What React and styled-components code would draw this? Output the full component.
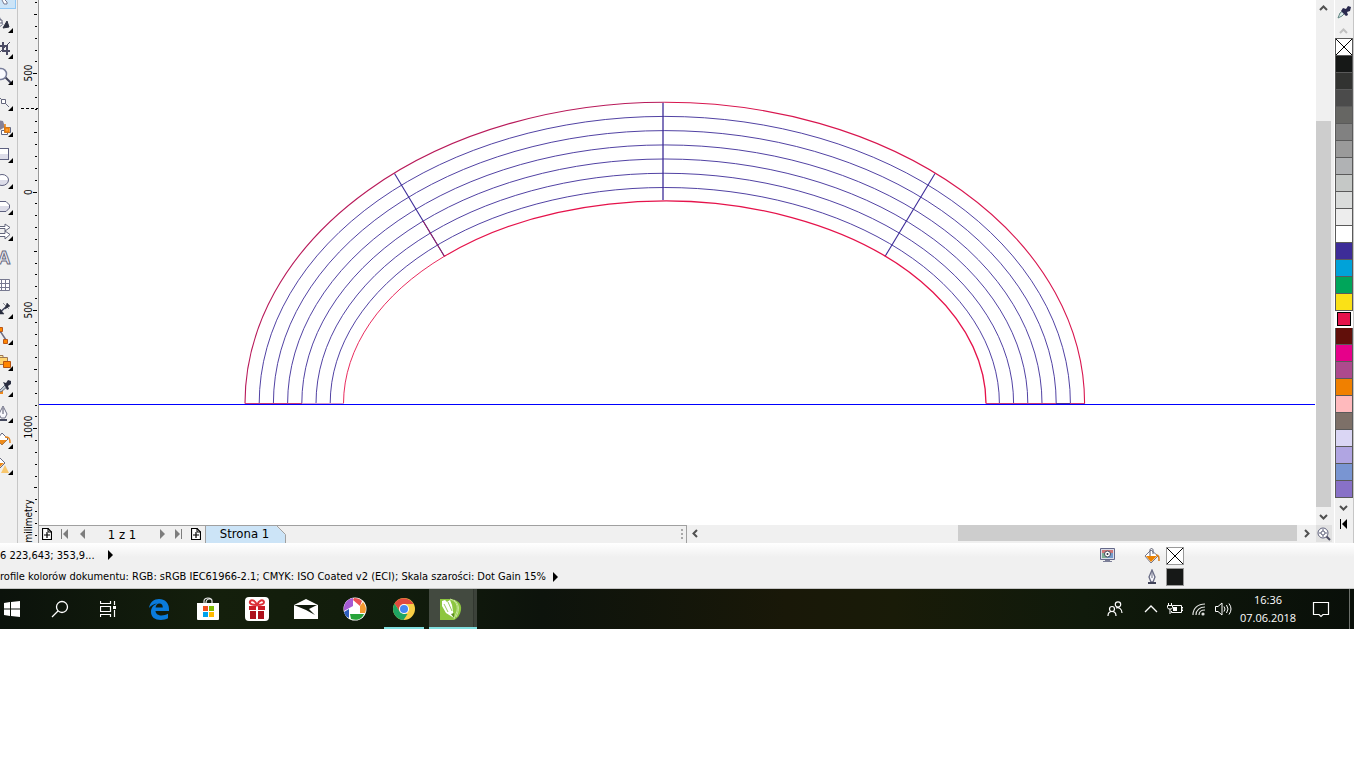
import React from 'react';
import styled, { createGlobalStyle } from 'styled-components';

const GlobalStyle = createGlobalStyle`
  * {
    box-sizing: border-box;
  }

  body {
    margin: 0;
    background: #fff;
    color: #000;
    font-family: "DejaVu Sans Condensed", "DejaVu Sans", sans-serif;
    font-size: 11px;
  }

  button {
    display: flex;
    align-items: center;
    justify-content: center;
    flex: none;
    margin: 0;
    padding: 0;
    border: 0;
    background: none;
    color: inherit;
    font: inherit;
  }

  svg {
    display: block;
    flex: none;
  }
`;

const Screen = styled.div`
  padding-right: 12px;
  overflow: hidden;
`;

const Workspace = styled.main`
  display: grid;
  grid-template-columns: 18px 21px minmax(0, 1fr) 18px 20px;
  grid-template-rows: auto 18px;
  background: #f0f0f0;
`;

const Toolbox = styled.nav`
  grid-row: 1 / 3;
  border-right: 1px solid #c6c6c6;
`;

const ToolButton = styled.button`
  width: 16px;
  height: ${props => props.height || '26px'};
  background: ${props => props.active ? '#cce4f7' : 'none'};
  border: solid #90c8f6;
  border-width: ${props => props.active ? '0 1px 1px 0' : '0'};
`;

const Ruler = styled.div`
  grid-row: 1 / 3;
  border-right: 1px solid #999;
`;

const Canvas = styled.section`
  background: #fff;
  overflow: hidden;
`;

const VerticalScroll = styled.div`
  display: flex;
  flex-direction: column;
  width: 15px;
`;

const HorizontalScroll = styled.div`
  display: flex;
  flex: 1;
  align-items: stretch;
  padding-bottom: 2px;
`;

const ScrollTrack = styled.div`
  flex: 1;
  display: flex;
  flex-direction: ${props => props.vertical ? 'column' : 'row'};
  justify-content: flex-end;
`;

const ScrollThumb = styled.div`
  flex: 0 0 ${props => props.size};
  background: #cdcdcd;
`;

const ScrollButton = styled.button`
  width: ${props => props.width || '15px'};
  height: ${props => props.height || '16px'};
  color: #505050;
`;

const PageBar = styled.div`
  grid-column: 3;
  display: flex;
  min-width: 0;
`;

const PageNav = styled.div`
  display: flex;
  align-items: center;
  width: 648px;
  border-top: 1px solid #a0a0a0;
  border-right: 1px solid #a0a0a0;
`;

const NavButton = styled.button`
  width: ${props => props.width};
  height: 16px;
  padding-bottom: 1px;
  color: #7d7d7d;
`;

const PageCount = styled.span`
  width: 68px;
  padding-right: 2px;
  text-align: center;
  font-size: 13px;
  line-height: 16px;
`;

const PageTab = styled.button`
  position: relative;
  width: 81px;
  height: 17px;
  padding: 0 3px 2px 0;
  background: #cce4f7;
  border-left: 1px solid #a0a0a0;
  font-size: 13px;
`;

const TabEdge = styled.svg`
  position: absolute;
  top: 0;
  right: 0;
`;

const Grip = styled.div`
  margin-left: auto;
  padding-right: 3px;
`;

const ZoomCorner = styled.button`
  width: 16px;
  height: 17px;
  background: #e1e1e1;
`;

const Palette = styled.aside`
  grid-column: 5;
  grid-row: 1 / 3;
  display: flex;
  flex-direction: column;
  align-items: flex-start;
  border: solid #fff;
  border-width: 0 0 0 1px;
  box-shadow: inset -1px 0 #c6c6c6;
`;

const PaletteButton = styled.button`
  width: ${props => props.width || '18px'};
  height: ${props => props.height};
  color: ${props => props.color || '#505050'};
`;

const Swatch = styled.button`
  width: 18px;
  height: 17px;
  background: ${props => props.color};
  border: solid #5a5a5a;
  border-width: 0 1px 1px 1px;
  ${props => props.first && 'height: 18px; border-top-width: 1px;'}
  ${props => props.selected && `
    border-width: 0;
    padding-right: 1px;
    background: #fff;
  `}
`;

const SelectedFill = styled.span`
  width: 14px;
  height: 14px;
  margin-bottom: 1px;
  border: 1px solid #000;
  background: ${props => props.color};
`;

const StatusBar = styled.footer`
  display: grid;
  grid-template-columns: minmax(0, 1fr) 44px 22px 188px;
  grid-template-rows: 23px 20px;
  height: 46px;
  padding-top: 1px;
  background: linear-gradient(#fff, #f0f0f0 14px);
  border-bottom: 1px solid #c6c6c6;
`;

const StatusText = styled.div`
  display: flex;
  align-items: center;
  gap: ${props => props.gap};
  padding-bottom: 1px;
  white-space: nowrap;
`;

const StatusCell = styled.div`
  display: flex;
  align-items: center;
  grid-column: ${props => props.column};
`;

const Chip = styled.span`
  width: 18px;
  height: 18px;
  border: 1px solid #999;
  background: ${props => props.color};
`;

const Taskbar = styled.footer`
  display: flex;
  height: 40px;
  color: #fff;
  background: linear-gradient(90deg, #0b120b 0, #141f0c 16%, #111c0c 30%, #0d130c 40%, #191808 58%, #191b08 66%, #101a0b 80%, #090f09 100%);
`;

const TaskButton = styled.button`
  width: ${props => props.width || '48px'};
  height: 40px;
`;

const AppButtons = styled.div`
  display: flex;
  gap: 1px;
  margin-left: 15px;
`;

const AppButton = styled(TaskButton)`
  background: ${props => props.active ? 'linear-gradient(90deg, #434a40 44px, #272c25 44px, #3c423a 45px)' : 'none'};
  border-bottom: ${props => props.running ? '2px solid #80dfdf' : '0'};
  padding-top: 2px;
  padding-right: ${props => props.active ? '4px' : '0'};
  ${props => props.inset && 'width: 40px; margin: 0 4px;'}
`;

const Tray = styled.div`
  display: flex;
  margin-left: auto;
`;

const Clock = styled.button`
  flex-direction: column;
  width: 66px;
  height: 40px;
  font-family: "Open Sans", "Noto Sans", sans-serif;
  font-size: 11px;
  line-height: 18px;
`;

const ActionButton = styled(TaskButton)`
  padding-right: 8px;
`;

const ShowDesktop = styled.button`
  width: 5px;
  height: 40px;
  border-left: 1px solid #6c706b;
`;

const SWATCHES = [
  '#fff', '#161817', '#323331', '#4b4b4b', '#666663', '#818181', '#9a9a9a',
  '#b0b2b4', '#c5c8c6', '#dadcdb', '#ededed', '#fff', '#3d2c98', '#00a2d9',
  '#00a55a', '#fae117', '#e5134b', '#610f0a', '#e6008a', '#ad4a8d', '#f08000',
  '#ffbabd', '#7d7068', '#dad6f4', '#b0a5e2', '#7995d2', '#8871c7'
];

const Flyout = () => <path d="M13 19v5H8z" fill="#000" />;

const TOOLS = [
  {
    name: 'Shape',
    drawing: <>
      <path d="M-1 7l4 9M-2 19l4-3" stroke="#777b93" fill="none" />
      <path d="M-1 11h3v3h-3z" fill="#fff" stroke="#606078" />
      <path d="M7 12l2 6-6 1z" fill="#2d3041" stroke="#2d3041" />
    </>
  },
  {
    name: 'Crop',
    drawing: <>
      <path d="M-1 11H7v9M3 7v9h7" stroke="#4b4b64" strokeWidth="2" fill="none" />
      <path d="M10 7L0 17" stroke="#4b4b64" />
    </>
  },
  {
    name: 'Zoom',
    drawing: <>
      <path d="M5 16l6 6" stroke="#41435a" strokeWidth="2" />
      <circle cx="1" cy="13" r="5.500" fill="#f9faff" stroke="#777d9a" strokeWidth="1.500" />
    </>
  },
  {
    name: 'Freehand',
    drawing: <>
      <path d="M-3 8l6 6 6 6" stroke="#676a82" fill="none" />
      <path d="M1.500 12.500h4v4h-4z" fill="#fff" stroke="#65677d" />
    </>
  },
  {
    name: 'Smart fill',
    drawing: <>
      <path d="M-2 7l5 1 2 6-5 3z" fill="#858197" />
      <path d="M4.500 14.500h6v5h-6zM1.500 17.500h6v4h-6z" fill="#fff" stroke="#606682" />
      <path d="M5 11v8h4v-4H5" stroke="#f17d00" strokeWidth="1.500" fill="#f99f35" />
    </>
  },
  {
    name: 'Rectangle',
    drawing: <rect x="-5.500" y="9.500" width="14" height="11" fill="url(#silver)" stroke="#5e6180" />
  },
  {
    name: 'Ellipse',
    drawing: <ellipse cx="2" cy="15" rx="6.500" ry="5.500" fill="url(#silver)" stroke="#5e6180" />
  },
  {
    name: 'Polygon',
    drawing: <path d="M-4 10.500H6L9.500 14v3L6 20.500H-4z" fill="url(#silver)" stroke="#5e6180" />
  },
  {
    name: 'Basic shapes',
    drawing: <path d="M-2 9.500h7V7l5 3.500L5 14v-2.500h-7zM-2 16.500h7V14l5 3.500L5 22v-2.500h-7z" fill="#fff" stroke="#62667c" />
  },
  {
    name: 'Text',
    plain: true,
    drawing: <text x="4" y="21" fontSize="18" textAnchor="middle" fontFamily="Liberation Sans" fontWeight="700" fill="#f6f6fc" stroke="#696b80">A</text>
  },
  {
    name: 'Table',
    plain: true,
    drawing: <path d="M-4 10.500H9.500v11H-4zM-4 14.500H9M-4 18.500H9M1.500 10v12M5.500 10v12" fill="#fff" stroke="#777990" />
  },
  {
    name: 'Dimension',
    drawing: <>
      <path d="M-3 20L7 11" stroke="#3d415b" strokeWidth="1.500" />
      <path d="M3 8l6 6M7 8l3 3-5 3zM0 14v5h4z" fill="#292d3e" stroke="#292d3e" strokeWidth="0.500" />
    </>
  },
  {
    name: 'Connector',
    drawing: <>
      <path d="M0 10l6 9" stroke="#6d6c83" strokeWidth="1.500" />
      <path d="M-1.500 6.500h4v4h-4zM3.500 18.500h4v4h-4z" fill="#ff8700" stroke="#b9571a" />
    </>
  },
  {
    name: 'Blend',
    drawing: <>
      <path d="M-3 8.500h6v7h-6z" fill="#fff0a0" stroke="#9e7653" />
      <path d="M-.5 10.500h8v7h-8z" fill="#ffd570" stroke="#9e7653" />
      <path d="M3.500 14.500h7v6h-7z" fill="#ff8500" stroke="#b55210" />
    </>
  },
  {
    name: 'Color eyedropper',
    drawing: <>
      <path d="M-3 17h6v4h-6z" fill="#f18a1b" />
      <path d="M-1 18L6 11l2 2-7 6z" fill="#c2cbd2" stroke="#6c7488" />
      <path d="M3 9l3 1 2-3 3 1v3l-3 2 1 3-2 1z" fill="#2a2e40" />
    </>
  },
  {
    name: 'Outline pen',
    drawing: <>
      <path d="M3 7l4 8-2 4H1l-2-4z" fill="#f8f8fc" stroke="#717388" />
      <path d="M3 9v6" stroke="#505368" />
      <path d="M-1 20h8v2h-8z" fill="#45495e" />
    </>
  },
  {
    name: 'Interactive fill',
    drawing: <>
      <path d="M-2 13l4-5 6 6-6 6-5-5" fill="#fff" stroke="#65677e" />
      <path d="M-3 15h10l-5 5z" fill="#ee8b19" />
      <path d="M5 12c4 0 5 1 5 6" stroke="#e7851a" strokeWidth="1.500" fill="none" />
    </>
  },
  {
    name: 'Transparency',
    drawing: <>
      <path d="M-4 9l4-2 5 5-5 5-4-1" fill="#fff" stroke="#696c82" />
      <path d="M-3 12h7l-4 4z" fill="#ee8b19" />
      <path d="M5 14l4 8H1z" fill="#f8c76e" />
    </>
  }
];

const Chevron = ({ turn = 0 }) =>
  <svg width="9" height="9" viewBox="0 0 9 9">
    <path d="M1 6l3.500-3.500L8 6" fill="none" stroke="currentColor" strokeWidth="2" transform={`rotate(${turn} 4.500 4.500)`} />
  </svg>;

const AddPageIcon = () =>
  <svg width="10" height="12" viewBox="0 0 10 12">
    <path d="M.5.5H6l3.500 3.500v7.500H.5zM5 4v6M2 7h6" fill="#fff" stroke="#000" strokeWidth="1.200" />
    <path d="M6 0v4h4" fill="none" stroke="#000" />
  </svg>;

const Arrow = ({ left, bar }) =>
  <svg width="9" height="10" viewBox="0 0 9 10">
    <g transform={left ? 'matrix(-1 0 0 1 9 0)' : undefined} fill="currentColor">
      <path d="M1 0l5 5-5 5z" />
      {bar && <path d="M7 0h1v10H7z" />}
    </g>
  </svg>;

const EyedropperIcon = () =>
  <svg width="14" height="14" viewBox="0 0 14 14">
    <path d="M1 13l2-5 4-3 2 2-4 4z" fill="#dcebea" stroke="#608581" />
    <path d="M6 3l3 1 2-3 3 1-1 4-3 1 1 3-2 1-5-5z" fill="#29294d" />
  </svg>;

const BucketIcon = () =>
  <svg width="16" height="16" viewBox="0 0 16 16">
    <path d="M7 2l7 6-7 7-6-7z" fill="#fff" stroke="#74778b" />
    <path d="M2 8h11l-6 6z" fill="#ec8200" />
    <path d="M6 8V2c0-2 3-2 3 0v4" fill="none" stroke="#5b5d72" />
    <path d="M12 7c3 0 3 2 3 6" fill="none" stroke="#d87c17" strokeWidth="1.500" />
  </svg>;

const PenIcon = () =>
  <svg width="16" height="16" viewBox="0 0 16 16">
    <path d="M8 1l3 7-2 5H7L5 8z" fill="#f8f8fc" stroke="#696c85" strokeWidth="1.300" />
    <path d="M8 3v6" stroke="#6d7087" />
    <path d="M4 13h8v2H4z" fill="#414459" />
  </svg>;

const ProofIcon = () =>
  <svg width="15" height="15" viewBox="0 0 15 15">
    <path d="M.5.5h14v11H.5z" fill="#dadce8" stroke="#65698a" />
    <path d="M2 2h11v3H2z" fill="#cf7777" />
    <path d="M2 5h5v5H2z" fill="#7eae94" />
    <path d="M7 5h6v5H7z" fill="#759bcb" />
    <circle cx="7.500" cy="6" r="3" fill="#fff" stroke="#45485c" />
    <circle cx="7.500" cy="6" r="1" fill="#2a2c3a" />
    <path d="M5 12h5v1h2v1H3v-1h2z" fill="#7c7f98" />
  </svg>;

const CrossIcon = () =>
  <svg width="16" height="16" viewBox="0 0 16 16">
    <path d="M0 0l16 16M16 0L0 16" stroke="#000" />
  </svg>;

const RulerScale = () => {
  const ticks = [];
  for (let i = 0; i < 46; i++) {
    const y = Math.floor(2.800 + i * 11.830) + 0.5;
    // the scale reads 500 at the seventh division
    const long = (i - 6) % 10 === 0;
    const half = (i - 1) % 5 === 0;
    ticks.push(`M${long ? 15 : half ? 16 : 17} ${y}H19`);
  }
  return (
    <svg width="20" height="543" viewBox="0 0 20 543">
      <path d={ticks.join('')} stroke="#000" />
      <path d="M3 108.500H20" stroke="#000" strokeDasharray="3 2" />
      {[['500', 73], ['0', 192], ['500', 310], ['1000', 427], ['milimetry', 521]].map(([label, y]) =>
        <text key={y} x="14" y={y} fontSize="10" textAnchor="middle" transform={`rotate(-90 14 ${y})`}>{label}</text>
      )}
    </svg>
  );
};

const RINGS = [1, 2, 3, 4, 5, 6].map(i => 14.200 * i);

const ArchDrawing = () =>
  <svg width="100%" height="525" viewBox="39 0 1277 525" preserveAspectRatio="xMinYMin slice">
    <g fill="none" stroke="#3d2c98" strokeWidth="0.900">
      {RINGS.map(d =>
        <path key={d} d={`M${245 + d} 403.500A${419.800 - d} ${301.300 - d} 0 0 1 ${1084.600 - d} 403.500`} />
      )}
      <path d="M394.500 173.500L444.500 256.500" strokeWidth="1.100" />
      <path d="M935 173.500L885 256.500" strokeWidth="1.100" />
      <path d="M663 103V200" strokeWidth="2" strokeOpacity="0.650" />
    </g>
    <path d="M423 221L444.500 256.500" stroke="#a01f60" />
    <g fill="none" strokeWidth="1.100">
      <path d="M245 403.500A419.800 301.300 0 0 1 664.800 102.200" stroke="#b81a5a" />
      <path d="M664.800 102.200A419.800 301.300 0 0 1 1084.600 403.500" stroke="#d8164f" />
      <path d="M343.500 403.500A321.200 202.800 0 0 1 444.500 256.200" stroke="#e5134b" strokeWidth="0.900" />
      <path d="M444.500 256.200A321.200 202.800 0 0 1 986 403.500" stroke="#e5134b" strokeWidth="1.300" />
    </g>
    <path d="M245 403.500H302M986 403.500H1085" stroke="#c83d72" />
    <path d="M302 403.500H344" stroke="#d99bc4" />
    <path d="M1056 403.500H1070" stroke="#5a2b85" />
    <path d="M39 404.500H1315" stroke="#0000ff" />
  </svg>;

const StartIcon = () =>
  <svg width="16" height="16" viewBox="0 0 16 16">
    <path d="M0 2l6-1v6.500H0zM7 1l9-1v7.500H7zM0 8.500h6V15l-6-1zM7 8.500h9V16l-9-1z" fill="#fff" />
  </svg>;

const SearchIcon = () =>
  <svg width="18" height="18" viewBox="0 0 18 18">
    <circle cx="11" cy="7" r="5.500" fill="none" stroke="#fff" strokeWidth="1.300" />
    <path d="M7 11l-6 6" stroke="#fff" strokeWidth="1.300" />
  </svg>;

const TaskViewIcon = () =>
  <svg width="17" height="16" viewBox="0 0 17 16">
    <path d="M.5 0v2.500h10V0M.5 5.500h10v5H.5zM.5 16v-2.500h10V16M14.500 0v4M14.500 9v7" fill="none" stroke="#fff" strokeWidth="1.200" />
    <path d="M13 5h3v3h-3z" fill="#fff" />
  </svg>;

const EdgeIcon = () =>
  <svg width="22" height="22" viewBox="0 0 22 22">
    <path d="M1 10C2 4 6 1 11 1c6 0 10 4 10 10v2H7.500c.2 3 3 4.500 6 4.500 2.300 0 4.500-.7 6.500-1.700v4.500c-2 1.100-4.600 1.700-7.200 1.700C7 22 3 19 3 14c0-4 2.200-7 6-8.500C5.800 5.700 3 7.500 1 10zM7.600 9.500h7.200c0-2.500-1.100-4-3.500-4-2.200 0-3.500 1.800-3.700 4z" fill="#0a7bdb" fillRule="evenodd" />
  </svg>;

const StoreIcon = () =>
  <svg width="24" height="24" viewBox="0 0 24 24">
    <path d="M8 7V4c0-4 8-4 8 0v3M10 6c0-5 6-5 6-2" fill="none" stroke="#e8e8e8" strokeWidth="1.200" />
    <path d="M1 6h22v16q0 1-1 1H2q-1 0-1-1z" fill="#fff" />
    <path d="M7 9h5v5H7z" fill="#f05020" />
    <path d="M13 9h5v5h-5z" fill="#7cb900" />
    <path d="M7 15h5v5H7z" fill="#00a2ed" />
    <path d="M13 15h5v5h-5z" fill="#ffb900" />
  </svg>;

const GiftIcon = () =>
  <svg width="24" height="24" viewBox="0 0 24 24">
    <rect width="24" height="24" rx="4" fill="#fff" />
    <path d="M12 8C9 1 4 3 5 6q1 2 7 2c6 0 7-1 7-3-1-3-5-2-7 3z" fill="none" stroke="#dc3038" strokeWidth="2" />
    <path d="M4 9h7v4H4zM13 9h7v4h-7z" fill="#cc1b26" />
    <path d="M5 14h6v8H5zM13 14h6v8h-6z" fill="#ad101b" />
  </svg>;

const MailIcon = () =>
  <svg width="24" height="20" viewBox="0 0 24 20">
    <path d="M0 6L12 0l12 6v14H0z" fill="#fff" />
    <path d="M0 6h23l-8 4 6 6-9-5z" fill="#10190c" />
  </svg>;

const PicasaIcon = () =>
  <svg width="24" height="24" viewBox="0 0 24 24">
    <circle cx="12" cy="12" r="11.500" fill="#fff" />
    <path d="M10 1v8l-9 5C0 7 4 2 10 1z" fill="#a65bd3" />
    <path d="M11 1c4 0 6 1 8 3l-2 5-7-6z" fill="#ec5252" />
    <path d="M20 5c4 5 3 8 2 11h-5V9z" fill="#f69a32" />
    <path d="M7 17h14c-2 5-7 7-13 5z" fill="#27a33a" />
    <path d="M1 15l5-3v9c-3-1-4-3-5-6z" fill="#2d5cbd" />
  </svg>;

const ChromeIcon = () =>
  <svg width="22" height="22" viewBox="0 0 22 22">
    <circle cx="11" cy="11" r="11" fill="#f8ce45" />
    <path d="M1.500 5.500A11 11 0 0 1 20.500 6H11L6.700 13.500z" fill="#e04a3f" />
    <path d="M1.500 5.500L6.700 13.500 11 16l3.500 0L10.500 22A11 11 0 0 1 1.500 5.500z" fill="#1fa463" />
    <circle cx="11" cy="11" r="5" fill="#fff" />
    <circle cx="11" cy="11" r="4" fill="#4587f3" />
  </svg>;

const CorelIcon = () =>
  <svg width="22" height="22" viewBox="0 0 22 22">
    <path d="M0 1h9c8 0 13 4 12 11-1 5-3 8-7 10H0z" fill="#8dc63f" />
    <path d="M10 1c6 2 8 6 7 12l-3 8M14 2c5 4 6 9 2 17" fill="none" stroke="#c9e59d" />
    <path d="M2 3l3-1 2 2 3-2 2 5 2 13-8-5-4-7z" fill="#fff" />
    <path d="M4 6l4 8M8 4l4 9" stroke="#9bc961" />
    <path d="M11 16l3 4v-5z" fill="#5d8f22" />
  </svg>;

const PeopleIcon = () =>
  <svg width="16" height="16" viewBox="0 0 16 16" fill="none" stroke="#fff" strokeWidth="1.200">
    <circle cx="5" cy="8" r="2.500" />
    <path d="M1 15c0-6 8-6 8 0" />
    <circle cx="11" cy="3.500" r="2.700" />
    <path d="M9 7c3-1 6 1 6 5" />
  </svg>;

const TrayChevron = () =>
  <svg width="14" height="8" viewBox="0 0 14 8">
    <path d="M1 7l6-6 6 6" fill="none" stroke="#fff" strokeWidth="1.300" />
  </svg>;

const BatteryIcon = () =>
  <svg width="16" height="12" viewBox="0 0 16 12">
    <path d="M6 2.500h8.500v7H4.500V8M15 4.500h1v3h-1" fill="none" stroke="#fff" />
    <path d="M6 4h4v4H6z" fill="#fff" />
    <path d="M1.500 0v2M4.500 0v2M.5 2.500h5v2l-1 1.500h-3l-1-1.500zM3 6v5" fill="none" stroke="#fff" />
  </svg>;

const WifiIcon = () =>
  <svg width="14" height="13" viewBox="0 0 14 13" fill="none" stroke="#e0e2df" strokeWidth="1.200">
    <path d="M1 12C1 5 6 1 13 1M4 12c0-5 4-8 9-8M7 12c0-3 2-5 6-5" />
    <circle cx="11" cy="11" r="1" fill="#fff" />
  </svg>;

const VolumeIcon = () =>
  <svg width="17" height="14" viewBox="0 0 17 14" fill="none" stroke="#fff">
    <path d="M.5 4.500H3l4-3.500v12L3 9.500H.5zM9 4.500q2 2.500 0 5M11.500 3q3 4 0 8M14 1.500q4 5.500 0 11" />
  </svg>;

const ActionIcon = () =>
  <svg width="18" height="17" viewBox="0 0 18 17">
    <path d="M1.500 1.500h15v12H11L9 15.500 7 13.500H1.500z" fill="none" stroke="#fff" strokeWidth="1.200" />
  </svg>;

const ToolboxPanel = () =>
  <Toolbox aria-label="Toolbox">
    <ToolButton active={1} height="9px" aria-label="Pick">
      <svg width="16" height="9" viewBox="0 0 16 9">
        <defs>
          <linearGradient id="silver" x2="0" y2="1">
            <stop offset="0.500" stopColor="#fff" />
            <stop offset="0.500" stopColor="#dddde9" />
          </linearGradient>
        </defs>
        <path d="M2 0l2 4h3V2L5 0" fill="#fff" stroke="#777b93" />
      </svg>
    </ToolButton>
    {TOOLS.map(tool =>
      <ToolButton key={tool.name} aria-label={tool.name}>
        <svg width="16" height="26" viewBox="0 0 16 26">
          {tool.drawing}
          {!tool.plain && <Flyout />}
        </svg>
      </ToolButton>
    )}
  </Toolbox>;

const PalettePanel = () =>
  <Palette aria-label="Colour palette">
    <PaletteButton height="24px" aria-label="Eyedropper"><EyedropperIcon /></PaletteButton>
    <PaletteButton width="17px" height="14px" color="#c0c0c0" aria-label="Scroll up"><Chevron /></PaletteButton>
    {SWATCHES.map((color, i) => {
      const selected = color === '#e5134b';
      return (
        <Swatch key={i} color={color} first={i === 0 ? 1 : undefined} selected={selected} aria-label={color}>
          {i === 0 && <CrossIcon />}
          {selected && <SelectedFill color={color} />}
        </Swatch>
      );
    })}
    <PaletteButton width="17px" height="18px" aria-label="Scroll down"><Chevron turn={180} /></PaletteButton>
    <PaletteButton width="17px" height="16px" color="#000" aria-label="Expand palette"><Arrow left bar /></PaletteButton>
  </Palette>;

const PageControls = () =>
  <PageBar>
    <PageNav>
      <NavButton width="16px" aria-label="Add page before"><AddPageIcon /></NavButton>
      <NavButton width="18px" aria-label="First page"><Arrow left bar /></NavButton>
      <NavButton width="16px" aria-label="Previous page"><Arrow left /></NavButton>
      <PageCount>1 z 1</PageCount>
      <NavButton width="12px" aria-label="Next page"><Arrow /></NavButton>
      <NavButton width="18px" aria-label="Last page"><Arrow bar /></NavButton>
      <NavButton width="18px" aria-label="Add page after"><AddPageIcon /></NavButton>
      <PageTab>
        Strona 1
        <TabEdge width="10" height="17" viewBox="0 0 10 17">
          <path d="M0 0h10v9z" fill="#f0f0f0" />
          <path d="M1 0l8.500 8.500V17" fill="none" stroke="#a0a0a0" />
        </TabEdge>
      </PageTab>
      <Grip>
        <svg width="2" height="11" viewBox="0 0 2 11">
          <path d="M0 0h2v2H0zM0 4h2v2H0zM0 8h2v2H0z" fill="#a8a8a8" />
        </svg>
      </Grip>
    </PageNav>
    <HorizontalScroll>
      <ScrollButton width="17px" aria-label="Scroll left"><Chevron turn={-90} /></ScrollButton>
      <ScrollTrack>
        <ScrollThumb size="339px" />
      </ScrollTrack>
      <ScrollButton width="19px" aria-label="Scroll right"><Chevron turn={90} /></ScrollButton>
    </HorizontalScroll>
  </PageBar>;

const StatusPanel = () =>
  <StatusBar>
    <StatusText gap="12px">
      <span>6 223,643; 353,9...</span>
      <Arrow />
    </StatusText>
    <StatusCell column="2"><ProofIcon /></StatusCell>
    <StatusCell column="3"><BucketIcon /></StatusCell>
    <StatusCell column="4"><Chip color="#fff"><CrossIcon /></Chip></StatusCell>
    <StatusText gap="6px">
      <span>rofile kolorów dokumentu: RGB: sRGB IEC61966-2.1; CMYK: ISO Coated v2 (ECI); Skala szarości: Dot Gain 15%</span>
      <Arrow />
    </StatusText>
    <StatusCell column="3"><PenIcon /></StatusCell>
    <StatusCell column="4"><Chip color="#161817" /></StatusCell>
  </StatusBar>;

const TaskbarPanel = () =>
  <Taskbar>
    <TaskButton width="24px" aria-label="Start"><StartIcon /></TaskButton>
    <TaskButton width="72px" aria-label="Search"><SearchIcon /></TaskButton>
    <TaskButton width="24px" aria-label="Task view"><TaskViewIcon /></TaskButton>
    <AppButtons>
      <TaskButton aria-label="Edge"><EdgeIcon /></TaskButton>
      <TaskButton aria-label="Store"><StoreIcon /></TaskButton>
      <TaskButton aria-label="Gifts"><GiftIcon /></TaskButton>
      <TaskButton aria-label="Mail"><MailIcon /></TaskButton>
      <TaskButton aria-label="Picasa"><PicasaIcon /></TaskButton>
      <AppButton running={1} inset={1} aria-label="Chrome"><ChromeIcon /></AppButton>
      <AppButton running={1} active={1} aria-label="CorelDRAW"><CorelIcon /></AppButton>
    </AppButtons>
    <Tray>
      <TaskButton aria-label="People"><PeopleIcon /></TaskButton>
      <TaskButton width="24px" aria-label="Show hidden icons"><TrayChevron /></TaskButton>
      <TaskButton width="24px" aria-label="Battery"><BatteryIcon /></TaskButton>
      <TaskButton width="24px" aria-label="Network"><WifiIcon /></TaskButton>
      <TaskButton width="24px" aria-label="Volume"><VolumeIcon /></TaskButton>
      <Clock>
        <span>16:36</span>
        <span>07.06.2018</span>
      </Clock>
      <ActionButton aria-label="Notifications"><ActionIcon /></ActionButton>
      <ShowDesktop aria-label="Show desktop" />
    </Tray>
  </Taskbar>;

const App = () =>
  <Screen>
    <GlobalStyle />
    <Workspace>
      <ToolboxPanel />
      <Ruler><RulerScale /></Ruler>
      <Canvas><ArchDrawing /></Canvas>
      <VerticalScroll>
        <ScrollButton aria-label="Scroll up"><Chevron /></ScrollButton>
        <ScrollTrack vertical={1}>
          <ScrollThumb size="386px" />
        </ScrollTrack>
        <ScrollButton height="18px" aria-label="Scroll down"><Chevron turn={180} /></ScrollButton>
      </VerticalScroll>
      <PageControls />
      <ZoomCorner aria-label="Navigator">
        <svg width="14" height="14" viewBox="0 0 14 14">
          <path d="M9 9l4 4" stroke="#4c4c62" strokeWidth="2" />
          <circle cx="6" cy="6" r="5" fill="#fff" stroke="#5f617c" />
          <path d="M6 2v8M2 6h8" stroke="#62657e" />
          <circle cx="6" cy="6" r="2" fill="#fff" stroke="#62657e" />
        </svg>
      </ZoomCorner>
      <PalettePanel />
    </Workspace>
    <StatusPanel />
    <TaskbarPanel />
  </Screen>;

export default App;
